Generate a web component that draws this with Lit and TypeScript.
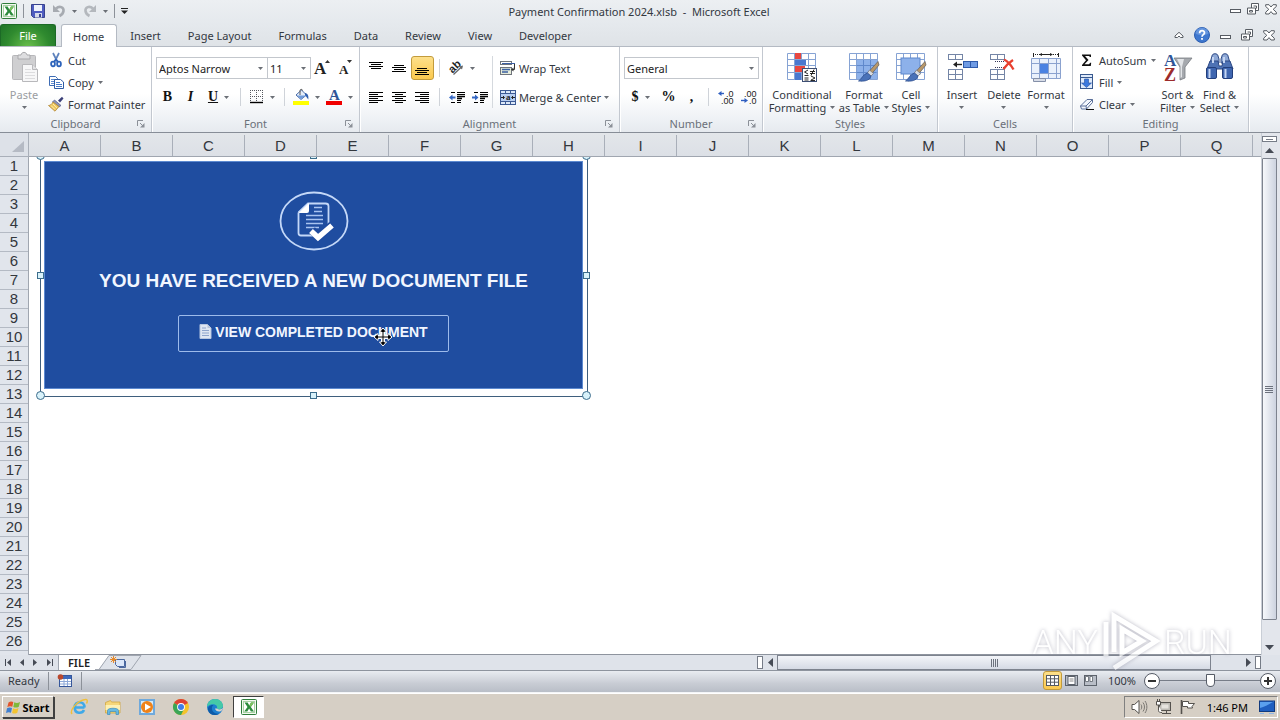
import { LitElement, html, svg, css, nothing, TemplateResult } from "lit";
import { customElement, property, state } from "lit/decorators.js";
import { classMap } from "lit/directives/class-map.js";

const icon = (w: number, h: number, body: unknown) =>
  html`<svg width=${w} height=${h} viewBox="0 0 ${w} ${h}" aria-hidden="true">${body}</svg>`;

const arrow = () => icon(5, 3, svg`<path d="M0 0h5L2.5 3z" fill="#6b6f76"/>`);

const excelMark = () => icon(16, 16, svg`
  <rect x="0.5" y="0.5" width="15" height="15" rx="1" fill="#f3f8f1" stroke="#2f7d3a"/>
  <rect x="2.5" y="2.5" width="11" height="11" fill="#fff" stroke="#a9d3a4"/>
  <path d="M3.5 3.5h3.2l1.6 2.9L10 3.5h3L9.8 8l3.2 4.6H9.9L8.1 9.6l-1.8 3H3.2L6.5 8z" fill="#2c8b3c"/>
  <path d="M10 3.5h3L9.8 8l-1.5-1.6z" fill="#7cc35f"/>`);

const saveIcon = () => icon(16, 16, svg`
  <path d="M1.500 1.500h13V14.500H3.500L1.500 12.500z" fill="#4f5cc0" stroke="#39438f"/>
  <rect x="4" y="2" width="8" height="6" fill="#eef2fc"/>
  <rect x="5" y="10" width="7" height="4.500" fill="#d6daea"/><rect x="9" y="11" width="2" height="3" fill="#39438f"/>`);
const undoIcon = () => icon(14, 14, svg`
  <path d="M4 4.500C7.500 1.500 12 3 11.500 7c-.3 2.400-2 4-4 5" fill="none" stroke="#a7abb1" stroke-width="2.600"/>
  <path d="M1 1v7h7z" fill="#a7abb1"/>`);
const redoIcon = () => icon(14, 14, svg`
  <path d="M10 4.500C6.500 1.500 2 3 2.500 7c.3 2.400 2 4 4 5" fill="none" stroke="#b4b8bd" stroke-width="2.600"/>
  <path d="M13 1v7H6z" fill="#b4b8bd"/>`);
const customizeIcon = () => icon(7, 6, svg`<path d="M0 .5h7" stroke="#222"/><path d="M0 2.500h7L3.500 6z" fill="#222"/>`);

const minIcon = () => icon(11, 11, svg`<rect x="0.5" y="5.500" width="10" height="3" fill="#fff" stroke="#575c63"/>`);
const restoreIcon = () => icon(12, 12, svg`
  <path d="M4.500.5h7v7h-3v3.500h-8v-6h4z" fill="#fff" stroke="#575c63"/>
  <path d="M4.500 5h4v3M6.500 3h3v2.500M2.500 7.500h3v1.500h-3z" fill="none" stroke="#575c63"/>`);
const closeIcon = () => icon(12, 11, svg`
  <path d="M.7.7h3.300L6 3 8 .7h3.300v1.800L8.200 5.300l3.100 2.900V10H8L6 7.600 4 10H.7V8.200l3.100-2.900L.7 2.500z" fill="#fff" stroke="#575c63"/>`);
const collapseIcon = () => icon(10, 8, svg`<path d="M1 6.500V5L5 1.300 9 5v1.500H6.500L5 5 3.500 6.500z" fill="#fff" stroke="#575c63"/>`);
const helpIcon = () => icon(16, 16, svg`
  <circle cx="8" cy="8" r="7.500" fill="#3f78cf" stroke="#2b5db0"/>
  <path d="M1.500 6.500a6.500 6 0 0 1 13 0C11 8.500 5 8.500 1.500 6.500z" fill="#7ba6e6" opacity=".6"/>
  <path d="M5.600 6.200c0-3.400 5-3.200 4.900-.3C10.400 7.800 8 7.600 8 9.800" fill="none" stroke="#fff" stroke-width="1.700"/>
  <rect x="7.100" y="11" width="1.800" height="1.800" fill="#fff"/>`);

const pasteIcon = () => icon(32, 32, svg`
  <rect x="4.500" y="3.500" width="23" height="24" rx="1" fill="#cfcfd1" stroke="#b7b7ba"/>
  <path d="M10 3h3c.5-3.500 5.500-3.500 6 0h3v4H10z" fill="#dedee0" stroke="#a9a9ac"/>
  <path d="M14.500 12.500h10l5 5V29.500h-15z" fill="#f7f7f8" stroke="#b8b8bb"/>
  <path d="M24.500 12.500v5h5" fill="#e2e2e4" stroke="#b8b8bb"/>
  <path d="M17 17.500h6M17 20.500h10M17 23.500h10M17 26.500h10" stroke="#dcdcde"/>`);
const cutIcon = () => icon(16, 16, svg`
  <path d="M5 1l4.500 9M11 1L6.500 10" stroke="#5f83bd" stroke-width="1.700" fill="none"/>
  <ellipse cx="5" cy="12" rx="1.900" ry="2.300" fill="none" stroke="#2c62ba" stroke-width="1.800"/>
  <ellipse cx="11" cy="12" rx="1.900" ry="2.300" fill="none" stroke="#2c62ba" stroke-width="1.800"/>
  <path d="M6 9.500L8 7.500l2 2" stroke="#2c62ba" stroke-width="1.500" fill="none"/>`);
const copyIcon = () => icon(16, 16, svg`
  <path d="M1.500 2.500h6l2 2v7h-8z" fill="#fff" stroke="#3e6db5"/><path d="M3 5.500h4M3 7.500h4M3 9.500h3" stroke="#5d8ad0"/>
  <path d="M6.500 5.500h6l3 2.500v6.500h-9z" fill="#fff" stroke="#2f5ca5"/><path d="M8 8.500h4M8 10.500h6M8 12.500h6" stroke="#4a7cc8"/>`);
const painterIcon = () => icon(16, 16, svg`
  <path d="M10 4.500L14 .8l1.500 1.700L12 6.500z" fill="#3a3f78"/>
  <path d="M6.500 4l6.500 5.500-2 1.500L4.500 6z" fill="#8d94b8" stroke="#555c86" stroke-width=".7"/>
  <path d="M5 6L11 10.500 7 15.200.5 9.500C2.500 9.500 4 8 5 6z" fill="#efc75c" stroke="#b3883a" stroke-width=".8"/>
  <path d="M3 9.500l4 4M5 8l4 3.800" stroke="#fff0bd" stroke-width=".9"/>`);

const growFont = () => icon(17, 16, svg`<text x="0" y="14" class="glyph" font-size="17">A</text><path d="M11 3h5L13.500 0z" fill="#333"/>`);
const shrinkFont = () => icon(15, 16, svg`<text x="1" y="14" class="glyph" font-size="13">A</text><path d="M9 0h5l-2.500 3z" fill="#333"/>`);
const borderIcon = () => icon(14, 14, svg`
  <path d="M0 .5h13M0 6.500h13M.5 0v12M6.500 0v12M12.500 0v12" stroke="#55585e" stroke-dasharray="1 1"/><path d="M0 12.500h13" stroke="#000" stroke-width="1.400"/>`);
const fillColorIcon = () => icon(16, 16, svg`
  <path d="M3 6l5.500-5 5 5L8 10.500z" fill="#e4edfa" stroke="#4b6da8"/><path d="M7 6V1.500c0-1.500 2.500-1.500 2.500 0" fill="none" stroke="#555"/>
  <path d="M12 4c3 .5 3.800 3 3.300 6.500-1.500-1.500-1.800-3.500-3.300-4z" fill="#2f5fb0"/><path d="M4 6.500h9L8 10.200z" fill="#6f9bdc"/>
  <rect x="0" y="12" width="16" height="4" fill="#ffff00"/>`);
const fontColorIcon = () => icon(16, 16, svg`<text x="3" y="11" class="glyph blue" font-size="15">A</text><rect x="0" y="12" width="16" height="4" fill="#f00000"/>`);

const lines = (ys: [number, number, number][]) => svg`${ys.map(([y, a, b]) => svg`<path d="M${a} ${y}.5H${b}" stroke="#000"/>`)}`;
const alignTop = () => icon(15, 15, lines([[1, 0, 14], [3, 2, 12], [5, 0, 14], [7, 2, 12]]));
const alignMid = () => icon(15, 15, lines([[4, 2, 12], [6, 0, 14], [8, 2, 12], [10, 0, 14]]));
const alignBot = () => icon(15, 15, lines([[7, 2, 12], [9, 0, 14], [11, 2, 12], [13, 0, 14]]));
const alignLeft = () => icon(15, 15, lines([[2, 0, 14], [4, 0, 9], [6, 0, 14], [8, 0, 9], [10, 0, 14], [12, 0, 9]]));
const alignCenter = () => icon(15, 15, lines([[2, 0, 14], [4, 3, 11], [6, 0, 14], [8, 3, 11], [10, 0, 14], [12, 3, 11]]));
const alignRight = () => icon(15, 15, lines([[2, 0, 14], [4, 5, 14], [6, 0, 14], [8, 5, 14], [10, 0, 14], [12, 5, 14]]));
const indentBody = svg`<path d="M2 2.500h4M8 2.500h8M2 12.500h4M8 12.500h4M8 4.500h8M8 10.500h4" stroke="#000"/><path d="M8 6.500h8M8 8.500h5" stroke="#000" stroke-width="1.600"/>`;
const outdent = () => icon(16, 15, svg`${indentBody}<path d="M6.500 7.500H3" stroke="#3467c4" stroke-width="2"/><path d="M0 7.500l3.500-3v6z" fill="#3467c4"/>`);
const indent = () => icon(16, 15, svg`${indentBody}<path d="M0 7.500h3" stroke="#3467c4" stroke-width="2"/><path d="M6.500 7.500l-3.500-3v6z" fill="#3467c4"/>`);
const orientIcon = () => icon(16, 16, svg`
  <text x="1" y="11" transform="rotate(-45 6 8)" font-size="11" font-weight="700" class="sans">ab</text>
  <path d="M5.500 14.500L14 6.500" stroke="#666" stroke-width="1.200"/><path d="M15 5.500l-4 1 3 3z" fill="#666"/>`);
const wrapIcon = () => icon(16, 16, svg`
  <rect x=".5" y="1.500" width="11" height="3" fill="#fff" stroke="#6f747c"/><path d="M2 3.500h13" stroke="#3b5fa3"/>
  <rect x=".5" y="7.500" width="11" height="7" fill="#e6ecda" stroke="#6f747c"/><path d="M2 9.500h8M2 12h6" stroke="#3b5fa3" stroke-width="1.300"/>
  <path d="M14.500 4v5.500h-2" fill="none" stroke="#333"/><path d="M11 9.500l2.500-2v4z" fill="#333"/>`);
const mergeIcon = () => icon(16, 15, svg`
  <rect x=".5" y=".5" width="15" height="14" fill="#dce8f8" stroke="#3c5a94"/><path d="M.5 3.500h15M.5 11.500h15M5.500.5v3M10.500.5v3M5.500 11.500v3M10.500 11.500v3" stroke="#3c5a94"/>
  <rect x="1" y="4" width="14" height="7" fill="#b7cdf0"/><text x="6" y="10" class="glyph" font-size="9">a</text>
  <path d="M1 7.500h3M12 7.500h3M3 6l1.500 1.500L3 9M13 6l-1.500 1.500L13 9" stroke="#222" fill="none"/>`);
const decInc = () => icon(16, 15, svg`<path d="M6 3.500H2" stroke="#2f5fc0" stroke-width="1.400"/><path d="M0 3.500L3.500 1v5z" fill="#2f5fc0"/>
  <text x="8" y="7" font-size="9" class="sans">.0</text><text x="3" y="14" font-size="9" class="sans">.00</text>`);
const decDec = () => icon(16, 15, svg`<path d="M0 10.500h5" stroke="#2f5fc0" stroke-width="1.400"/><path d="M7 10.500L3.500 8v5z" fill="#2f5fc0"/>
  <text x="3" y="7" font-size="9" class="sans">.00</text><text x="8" y="14" font-size="9" class="sans">.0</text>`);

const grid28 = svg`<path d="M1.500 1.500h28v26h-28z" fill="#fff" stroke="#86a3d4"/><path d="M1 7.500h28M1 13.500h28M1 20.500h28M8.500 1v26M15.500 1v26M22.500 1v26" stroke="#86a3d4"/>`;
const condIcon = () => icon(32, 32, svg`${grid28}
  <rect x="9" y="1" width="6" height="6" fill="#e8463f"/><rect x="9" y="8" width="11" height="5" fill="#4a78cf"/>
  <rect x="9" y="14" width="10" height="6" fill="#e8463f"/><rect x="9" y="21" width="6" height="7" fill="#4a78cf"/>
  <rect x="16.500" y="16.500" width="14" height="13" fill="#fff" stroke="#3d4f74"/>
  <path d="M22 18l-3.500 2 3.500 2M18.500 23.500h4M24 19.500h5M24 21.500h5M28 17.500l-3 6M18.500 26h4M18.500 28h4M25 24l4 2-4 2M24.500 28.500h4.500" stroke="#111" fill="none" stroke-width=".9"/>`);
const brush = svg`<path d="M30 9.500l-9 10 2.500 2.500 7.500-9z" fill="#b9986a" stroke="#6b665e" stroke-width=".8"/><path d="M21.500 18l4 3.500-3 3-3.500-3z" fill="#d8dbe0" stroke="#666" stroke-width=".6"/>
  <path d="M19.500 21l3.500 3c-1.500 5-7 5.500-12.500 5 3-1.500 4.500-7 9-8z" fill="#4a72b8" stroke="#2d4f8f" stroke-width=".8"/>`;
const tableIcon = () => icon(32, 32, svg`${grid28}<rect x="9" y="8" width="20" height="19" fill="#8db1ea"/><path d="M8.500 13.500h20M8.500 20.500h20M15.500 8v19M22.500 8v19" stroke="#5f88cc"/>${brush}`);
const stylesIcon = () => icon(32, 32, svg`${grid28}<rect x="6" y="6" width="19" height="16" fill="#8db1ea" stroke="#5f88cc"/>${brush}`);

const cells2 = (y: number) => svg`<rect x="2.500" y=${y + 0.5} width="14" height="5" fill="#fff" stroke="#7485a6"/><path d="M9.500 ${y}v5" stroke="#7485a6"/>`;
const insertCells = () => icon(32, 32, svg`${cells2(2)}${cells2(17)}${cells2(22)}
  <rect x="17.500" y="9.500" width="14" height="6" fill="#6f9be4" stroke="#2f5bab"/><path d="M24.500 9.500v6" stroke="#2f5bab"/>
  <path d="M10 12.500h6" stroke="#222" stroke-width="1.400"/><path d="M7 12.500l4-3v6z" fill="#222"/>`);
const deleteCells = () => icon(32, 32, svg`${cells2(2)}${cells2(17)}${cells2(22)}
  <path d="M7 9.500h10M7 15.500h10" stroke="#335" stroke-dasharray="1 1"/>
  <path d="M16 7.500c4 2 7 5.500 9.500 10M25 8c-4 2.500-7 5.500-9.500 9" stroke="#e8402f" stroke-width="2.400" fill="none"/>`);
const formatCells = () => icon(32, 32, svg`
  <path d="M3 2.500h26" stroke="#222" stroke-dasharray="1 1"/><path d="M10 2.500h12M3.500 1v4M28.500 1v4" stroke="#222"/><path d="M12 1L9 2.500 12 4zM20 1l3 1.500L20 4z" fill="#222"/>
  <path d="M1.500 6.500h29v20h-29z" fill="#eaf1fc" stroke="#8ba2cf"/><path d="M1.500 11.500h29M1.500 21.500h29M9.500 6.500v20M18.500 6.500v20M26.500 6.500v20" stroke="#8ba2cf"/>
  <rect x="10" y="12" width="8" height="9" fill="#4a82e2"/><path d="M3.500 26.500h12v3h-12z" fill="#d8dde8" stroke="#8590a8"/>`);
const sigma = () => icon(16, 16, svg`<path d="M3 2.500h9v2.500h-1L10 4H6l3.500 4L5.500 12.200H10l1.200-1.500h1L11.800 14H3v-1L7 8.300 3 3.500z" fill="#111"/>`);
const fillDown = () => icon(16, 16, svg`<rect x="1.500" y=".5" width="12" height="14" fill="#dfeafa" stroke="#39598f"/><path d="M1.500 3.500h12" stroke="#39598f"/><path d="M5.500 5h4v4h3L7.500 13.500 2.500 9h3z" fill="#3b78dd" stroke="#234f9f" stroke-width=".6"/>`);
const eraser = () => icon(16, 16, svg`<path d="M1.500 10L8 3.500h5.500v3L7.500 13h-5z" fill="#f4f7fc" stroke="#5a6f99"/><path d="M1.500 10h5.500l6.500-6.500M7 10l.5 3" fill="none" stroke="#5a6f99"/><path d="M7 13.500h8" stroke="#111"/>`);
const sortFilter = () => icon(32, 32, svg`
  <path d="M12 6h18l-7 9v11l-5 2V15z" fill="#a6a9ae" stroke="#777b82" stroke-width=".8"/><path d="M15 7h7l-2 8v10l-1.500 1V14z" fill="#e3e5e8"/>
  <text x="2" y="14" class="glyph blue" font-size="17">A</text><text x="2" y="29" class="glyph red" font-size="18">Z</text>`);
const findIcon = () => icon(32, 32, svg`
  <path d="M8 4c0-3 6-3 6 0l1 3v4H6zM18 4c0-3 6-3 6 0l2 7h-9V7z" fill="#8fa9d6" stroke="#2c4885"/>
  <path d="M6 9h8l1 5h3l1-5h7l3 8H3z" fill="#4e72b4" stroke="#2c4885"/>
  <rect x="2.500" y="15.500" width="10" height="11" rx="1.500" fill="#3f66b0" stroke="#233f7c"/><rect x="18.500" y="15.500" width="10" height="11" rx="1.500" fill="#3f66b0" stroke="#233f7c"/>
  <path d="M5.500 17v9M21.500 17v9M9 5v6M20 5v6" stroke="#c6d6f3" stroke-width="2"/>`);
const launcherIcon = () => icon(8, 8, svg`<path d="M.5 6V.5H6" fill="none" stroke="#8b9098"/><path d="M3 3l3 3" stroke="#8b9098"/><path d="M7.500 3v4.500H3z" fill="#8b9098"/>`);
const macroIcon = () => icon(16, 14, svg`
  <rect x="2.500" y="1.500" width="12" height="11" fill="#fff" stroke="#36579b"/><rect x="3" y="2" width="11" height="3" fill="#3c69bd"/>
  <path d="M3 7.500h11M3 10h11M7 5v7M10.500 5v7" stroke="#8ea9d8"/><circle cx="3.500" cy="3" r="2.800" fill="#b9482d"/>`);

const ieIcon = () => icon(18, 18, svg`
  <path d="M14.500 9.500H5.200M14.500 9.500c0-7-9.800-7-9.800 0s7.800 6 9.300 2.500" fill="none" stroke="#3fa9e8" stroke-width="2.600"/>
  <path d="M2 16C-1 12 8 2.500 15 1.500c3-.5 2.500 2.500 1.500 4" fill="none" stroke="#f0bf3a" stroke-width="1.400"/>`);
const folderIcon = () => icon(18, 18, svg`
  <path d="M1.500 4.500l5-2 1 1.500h8.500v11H1.500z" fill="#f5d67a" stroke="#d0a640" stroke-width=".8"/><path d="M1.500 7h14.500v5H1.500z" fill="#fdf0b4"/>
  <path d="M3.500 16.500v-4c0-3 11-3 11 0v4h-2.500v-3h-6v3z" fill="#67b9e2" stroke="#3c8dbb" stroke-width=".7"/>`);
const playerIcon = () => icon(18, 18, svg`<rect x="1" y="1" width="16" height="16" fill="#6fa9dc"/><rect x="3" y="3" width="12" height="12" fill="#d7ebf8"/><circle cx="9" cy="9" r="6" fill="#f08218"/><path d="M7 5.500l6 3.500-6 3.500z" fill="#fff"/>`);
const chromeIcon = () => icon(18, 18, svg`
  <circle cx="9" cy="9" r="8" fill="#f4c32b"/><path d="M2.070 5A8 8 0 0 1 15.930 5L9 9z" fill="#dd4236"/>
  <path d="M2.070 5A8 8 0 0 0 9 17L11.500 12 9 9z" fill="#3aa557"/><circle cx="9" cy="9" r="3.900" fill="#fff"/><circle cx="9" cy="9" r="3" fill="#3f7ee8"/>`);
const edgeIcon = () => icon(18, 18, svg`
  <circle cx="9" cy="9" r="8" fill="#1d7fd0"/><path d="M1 9C1 4 5 1 9 1c5 0 8 3.500 8 7 0 3-4 4-6 2.500C12 7 8 5.500 5 6.500 3 7.200 1.500 8 1 9z" fill="#45c9a8"/>
  <path d="M6 9c-1 4 3 7.500 7.500 6.500C9 18.500 3 17 2 12 1.500 9 4 6.500 7.500 7 6.800 7.500 6.200 8.200 6 9z" fill="#0e5ba8"/><path d="M11 10.500c2 1.500 4 1.200 6-.5-.3 2-1.500 3-3 3.500-2.500.5-4.500-1-5-3z" fill="#d6d3ce"/>`);
const windowsFlag = () => icon(15, 15, svg`
  <path d="M2.500 2.500C4 1.200 6 1.200 7.300 2L6.300 6.800C4.800 6 3 6 1.300 7.200z" fill="#e2552b"/><path d="M8.300 2.300c1.700.9 3.700.8 5.700-.3l-1.200 4.700c-1.700 1.100-3.700 1.200-5.500.3z" fill="#7fb93a"/>
  <path d="M1 8.300C2.700 7.200 4.500 7.200 6 8L5 12.700C3.500 12 1.800 12 0 13z" fill="#3f7fd0"/><path d="M7 8.300c1.700.9 3.700.8 5.500-.3l-1.200 4.700c-1.700 1.100-3.500 1.200-5.200.3z" fill="#f3c32f"/>`);

const speakerIcon = () => icon(18, 16, svg`<path d="M2 5.500h2.500L9 1.500v13L4.500 10.500H2z" fill="#fff" stroke="#55524e"/><path d="M11 5.500c1 1.500 1 3.500 0 5M13 3.500c2 2.500 2 6.500 0 9M15 2c2.500 3.500 2.500 8.500 0 12" fill="none" stroke="#7b7873"/>`);
const networkIcon = () => icon(17, 16, svg`<rect x="4.500" y="3.500" width="11" height="8" fill="#bdbab4" stroke="#55524e"/><rect x="6.500" y="5.500" width="7" height="4" fill="#e6e3de"/><path d="M7 14.500h9M11.500 12v2.500" stroke="#55524e"/><path d="M1.500 2.500v3.500h4V2.500zM2.500 0v3M4.500 0v3M3.500 6v5.500c0 1.500 1 2 3.500 2" stroke="#55524e" fill="#fff"/>`);
const flagIcon = () => icon(17, 16, svg`<path d="M2.500 1v14" stroke="#55524e" stroke-width="1.600"/><path d="M3.500 2.500h6v2h6l-2.500 3 .5 1.500H8.500V7.500h-5z" fill="#fff" stroke="#55524e"/>`);
const desktopIcon = () => icon(16, 14, svg`<rect x=".5" y="1" width="15" height="10.500" fill="#1f5fc0" stroke="#123b7e"/><path d="M1 8C6 7 10 4 15 1.500V2H1z" fill="#5aa0ee"/><path d="M1 13.500h4M10 13.500h5" stroke="#8fb7e6"/>`);

const viewGrid = () => icon(13, 11, svg`<rect x=".5" y=".5" width="12" height="10" fill="#fff" stroke="#555a62"/><path d="M0 3.800h13M0 7.200h13M4.500 0v11M8.500 0v11" stroke="#555a62"/>`);
const viewLayout = () => icon(13, 11, svg`<rect x=".5" y=".5" width="12" height="10" fill="#b9bec7" stroke="#5d636c"/><rect x="3" y="1.500" width="7" height="8" fill="#fff" stroke="#5d636c"/><path d="M4.500 4h4M4.500 6h4" stroke="#888"/>`);
const viewBreak = () => icon(13, 11, svg`<rect x=".5" y=".5" width="12" height="10" fill="#b9bec7" stroke="#5d636c"/><path d="M1.500 1.500h3v5h-3zM6 1.500h2.500v5H6z" fill="#fff" stroke="#5d636c" stroke-width=".8"/>`);
const tri = (d: string, w = 7, h = 7) => icon(w, h, svg`<path d=${d} fill="#464b55"/>`);

const badgeIcon = () => icon(70, 60, svg`
  <ellipse cx="35" cy="30" rx="33.500" ry="28.500" fill="none" stroke="#c4d8f8" stroke-width="1.800"/>
  <path d="M19.500 21.500L29 12.500h17.500q3 0 3 2.500v19M36 44.500H22q-2.500 0-2.500-2.500V21.500" fill="none" stroke="#c4d8f8" stroke-width="1.800"/>
  <path d="M19.500 22L30 12v8q0 2-2 2z" fill="#fff"/>
  <path d="M35 16.500h8M35 20.500h8M27 24.500h17M27 28.500h17M27 32.500h17M27 36.500h13" stroke="#a9c4f0" stroke-width="1.500"/>
  <path d="M33 39l6.500 7L53 34" fill="none" stroke="#1f4b9f" stroke-width="8"/>
  <path d="M32 40l7 6.500L53 34.500" fill="none" stroke="#fff" stroke-width="5.500"/>`);
const pageIcon = () => icon(13, 15, svg`<path d="M1 .5h7.500L12 4v10.500H1z" fill="#dfe6f2" stroke="#b7c6e0"/><path d="M8.500.5V4H12" fill="#b9c4d8"/><path d="M3 4h4M3 6.500h7M3 9h7M3 11.500h7" stroke="#8ea4cc"/>`);
const moveCursor = () => icon(18, 18, svg`
  <path d="M9 0l3.500 4H10.500v3.500H14V5.500L18 9l-4 3.500v-2h-3.500V14h2L9 18l-3.500-4h2v-3.500H4v2L0 9l4-3.500v2h3.500V4h-2z" fill="#000" stroke="#fff" stroke-width="1"/>
  <path d="M9 4v10M4 9h10" stroke="#fff" stroke-width="3"/><path d="M9 3v12M3 9h12" stroke="#000"/>`);
const newSheet = () => icon(44, 15, svg`
  <path d="M0 0h10L0 14z" fill="#fff"/><path d="M-4 14.500H0L10 .5H42L32 14.500H0" fill="none" stroke="#a0a6b0"/>
  <path d="M16.500 4.500h9v7h-7l-2-2z" fill="#dbe7fa" stroke="#4b689f"/><path d="M20 12.500h6.500V6" fill="none" stroke="#4b689f"/>
  <path d="M14.500 1v7M11 4.500h7M12 2l5 5M17 2l-5 5" stroke="#e58a2b"/>`);

const chrome = css`
  * { box-sizing: border-box; }
  button, select, input { font: inherit; color: inherit; background: none; border: 0; margin: 0; padding: 0; border-radius: 0; }
  button { display: inline-flex; align-items: center; justify-content: center; white-space: nowrap; }
  svg { display: block; flex: none; overflow: visible; }
  .glyph { font-family: "Liberation Serif", serif; font-weight: 700; fill: #222; }
  .glyph.blue { fill: #2f5597; }
  .glyph.red { fill: #9c2b2b; }
  .sans { font-family: "Liberation Sans", sans-serif; fill: #222; }
`;

@customElement("ribbon-group")
class RibbonGroup extends LitElement {
  @property() label = "";
  @property({ type: Boolean }) launcher = false;

  static styles = [chrome, css`
    :host { display: flex; flex-direction: column; flex: none; border-right: 1px solid #c3c8d0; box-shadow: 1px 0 0 #fff; }
    .body { flex: 1; display: flex; padding-top: 2px; }
    .foot { height: 17px; display: flex; align-items: center; color: #6a7079; padding: 0 6px 0 21px; }
    .name { flex: 1; text-align: center; }
    .slot { width: 15px; display: flex; justify-content: flex-end; }
  `];

  render() {
    return html`
      <div class="body"><slot></slot></div>
      <div class="foot">
        <span class="name">${this.label}</span>
        <span class="slot">${this.launcher ? html`<button aria-label="${this.label} settings">${launcherIcon()}</button>` : nothing}</span>
      </div>`;
  }
}

@customElement("app-root")
class AppRoot extends LitElement {
  @state() private tab = "Home";
  @state() private rowCount = 0;
  @state() private colCount = 0;

  private measure = () => {
    this.rowCount = Math.max(1, Math.floor((window.innerHeight - 222) / 19));
    this.colCount = Math.min(26, Math.max(1, Math.floor((window.innerWidth - 48) / 72)));
  };

  connectedCallback() {
    super.connectedCallback();
    this.measure();
    window.addEventListener("resize", this.measure);
  }
  disconnectedCallback() {
    window.removeEventListener("resize", this.measure);
    super.disconnectedCallback();
  }

  static styles = [chrome, css`
    :host { display: flex; flex-direction: column; height: 100vh; overflow: hidden; background: #fff;
      font-family: "Noto Sans", sans-serif; font-size: 11px; line-height: 13px; color: #33383f; }

    .title { display: grid; grid-template-columns: 1fr auto 1fr; align-items: center; height: 24px; flex: none;
      background: linear-gradient(#eceff2, #e5e9ed); padding: 0 3px 2px 1px; }
    .quick { display: flex; align-items: center; gap: 6px; }
    .pair { display: flex; align-items: center; gap: 6px; }
    .rule { width: 1px; height: 14px; background: #8c9199; }
    .win { display: flex; justify-content: flex-end; align-items: center; gap: 6px; padding-bottom: 4px; }

    .tabs { display: flex; height: 23px; flex: none; background: linear-gradient(#e5e9ed, #dfe3e7); border-bottom: 1px solid #b4bac3; }
    .tab { padding: 0 14px 0 13px; color: #33383f; }
    .file { width: 56px; margin: 0 5px 0 0; padding: 0; color: #fff; border-radius: 3px 3px 0 0;
      background: radial-gradient(circle at 50% 110%, #6cc04d, #2f8a2f 60%, #1f7428); border: 1px solid #1c6a26; border-bottom: 0; }
    .tab.on { background: #fff; border: 1px solid #b4bac3; border-bottom: 0; border-radius: 3px 3px 0 0; padding: 0 12px 0 11px; margin-bottom: -1px; }
    .docwin { margin-left: auto; display: flex; align-items: center; gap: 10px; padding: 0 5px 0 0; }

    .ribbon { display: flex; height: 86px; flex: none; background: linear-gradient(#fff 55%, #eef1f5 85%, #e6eaef); border-bottom: 1px solid #878d97; }
    .g-clip { width: 152px; } .g-font { width: 208px; } .g-align { width: 260px; } .g-num { width: 143px; }
    .g-styles { width: 175px; } .g-cells { width: 135px; } .g-edit { width: 176px; }
    .g-styles .large:first-child, .g-cells .large:first-child { margin-left: 3px; }
    .g-edit .small { margin: 0 1px 0 6px; }
    .large { flex-direction: column; justify-content: flex-start; width: 42px; height: 66px; gap: 4px; padding-top: 3px; }
    .large.mid { width: 48px; }
    .large.wide { width: 52px; }
    .large.widest { width: 72px; }
    .cap { display: flex; flex-direction: column; align-items: center; }
    .cap span { display: flex; align-items: center; gap: 4px; height: 13px; }
    .off { color: #9a9da2; }
    .small { display: flex; flex-direction: column; align-items: flex-start; }
    .small button { height: 22px; gap: 4px; }
    .two, .acol { display: flex; flex-direction: column; gap: 5px; padding: 7px 0 0 4px; }
    .acol { padding-left: 5px; }
    .row { display: flex; align-items: center; height: 24px; }
    .row button { height: 24px; min-width: 23px; }
    .row .drop { gap: 6px; min-width: 33px; }
    .row .text { gap: 3px; }
    .sep { width: 1px; height: 18px; background: #cfd3d9; margin: 0 5px; flex: none; }
    .letter { font: 700 14px/16px "Liberation Serif", serif; color: #111; }
    .italic { font-style: italic; }
    .under { text-decoration: underline; }
    .lit { background: linear-gradient(#fde08b, #fbc94f); border: 1px solid #c29b3c; border-radius: 3px; }
    .vsep { width: 1px; height: 52px; margin: 7px 3px 0 1px; background: #d5d9de; }

    .combo { display: flex; align-items: center; height: 22px; border: 1px solid #c3c7cd; background: #fff; color: #222; padding-right: 4px; }
    .combo + .combo { border-left: 0; }
    .combo select { appearance: none; flex: 1; min-width: 0; padding-left: 2px; outline: 0; }
    .c-face { width: 112px; } .c-size { width: 43px; } .c-num { width: 135px; }

    .work { flex: 1; min-height: 0; display: flex; background: #dfe3ea; }
    .sheet { flex: 1; min-width: 0; display: grid; grid-template-columns: 29px 1fr; grid-template-rows: 24px 1fr;
      font-family: "Liberation Sans", sans-serif; font-size: 15px; line-height: 18px; color: #33373d; }
    .corner { display: flex; align-items: flex-end; justify-content: flex-end; padding: 0 4px 4px 0; border: 1px solid #a9afb9; border-width: 0 1px 1px 0; background: #dde1e8; }
    .cols { display: flex; overflow: hidden; border-bottom: 1px solid #a0a6b0; background: linear-gradient(#e3e6ea, #dce0e6); padding-top: 2px; }
    .col { flex: 0 0 72px; border-right: 1px solid #a9afb9; text-align: center; padding-top: 2px; }
    .rows { overflow: hidden; border-right: 1px solid #a0a6b0; background: #e1e5ec; }
    .rowno { height: 19px; border-bottom: 1px solid #b4bac4; text-align: center; }
    .canvas { position: relative; overflow: hidden; background: #fff; border-bottom: 1px solid #8e949e; }

    .picture { position: absolute; left: 11px; top: -2px; width: 548px; height: 242px; border: 1px solid #3f5f7d; background: #fff; padding: 5px 4px 6px 3px; }
    .card { height: 228px; background: #1f4da0; color: #f1f6ff; display: flex; flex-direction: column; align-items: center; border: 1px solid #5d8ad0;
      font-family: "Liberation Sans", sans-serif; font-weight: 700; padding-top: 29px; }
    .head { font-size: 19px; line-height: 22px; margin: 19px 0 23px; white-space: nowrap; }
    .view { width: 271px; height: 37px; border: 1px solid #9dbbeb; border-radius: 2px; gap: 3px; font-size: 14px; padding-bottom: 4px; color: #f1f6ff; }
    .knob { position: absolute; width: 7px; height: 7px; margin: -4px; background: #d9f2fa; border: 1px solid #3c6d8c; }
    .round { width: 9px; height: 9px; margin: -5px; border-radius: 50%; }
    .t { top: 0; } .b { top: 100%; } .m { top: 50%; } .l { left: 0; } .c { left: 50%; } .r { left: 100%; }
    .cursor { position: absolute; left: 345px; top: 171px; }

    .vscroll { width: 19px; flex: none; display: flex; flex-direction: column; align-items: center; background: #e3e6ec; padding: 3px 4px 0 0; border-left: 1px solid #c9ced6; }
    .split { width: 15px; height: 6px; border: 1px solid #767c87; background: #fff; display: flex; align-items: center; justify-content: center; }
    .split i { width: 7px; height: 1px; background: #767c87; }
    .vscroll button { height: 16px; }
    .vthumb { flex: 1; width: 15px; border: 1px solid #7d838e; border-radius: 1px; background: linear-gradient(90deg, #f6f8fb, #cdd3df); display: flex; align-items: center; justify-content: center; }
    .vgap { height: 19px; }
    .grip { width: 8px; height: 7px; background: repeating-linear-gradient(#6c727d 0 1px, transparent 1px 2px); }
    .grip.h { width: 7px; height: 8px; background: repeating-linear-gradient(90deg, #6c727d 0 1px, transparent 1px 2px); }

    .sheets { display: flex; align-items: stretch; height: 15px; flex: none; background: #dfe3ea; }
    .nav { display: flex; width: 59px; justify-content: space-around; align-items: center; border-right: 1px solid #a0a6b0; padding: 0 2px; }
    .stab { background: #fff; width: 40px; font-weight: 600; color: #222; }
    .hscroll { margin-left: auto; width: 523px; display: flex; align-items: center; padding-right: 19px; }
    .hthumb { flex: 1; height: 15px; border: 1px solid #7d838e; background: linear-gradient(#f3f5f9, #d5dae4); display: flex; align-items: center; justify-content: center; }
    .nub { width: 6px; height: 13px; border: 1px solid #767c87; background: #fff; }
    .hscroll button { width: 14px; height: 15px; }
    .hgap { width: 30px; }

    .status { display: flex; align-items: center; height: 23px; flex: none; background: linear-gradient(#e9ecf1, #c8ccd4 60%, #b9bec7); border-top: 1px solid #8e949e; border-bottom: 1px solid #f4f5f7; padding: 0 4px 2px 8px; gap: 8px; }
    .status .rule { height: 18px; }
    .zoom { margin-left: auto; display: flex; align-items: center; }
    .zoom .vbtn { width: 19px; height: 19px; }
    .pct { width: 40px; text-align: center; margin: 0 2px; }
    .circ { width: 16px; height: 16px; border: 1px solid #555b66; border-radius: 50%; background: #fff; }
    .slider { appearance: none; width: 100px; height: 16px; background: linear-gradient(#777d88, #777d88) center / 100% 1px no-repeat; }
    .slider::-webkit-slider-thumb { appearance: none; width: 9px; height: 13px; background: #fff; border: 1px solid #555b66; border-radius: 1px 1px 5px 5px; }

    .task { display: flex; align-items: center; height: 27px; flex: none; background: #d6cfc5; border-top: 1px solid #fff; padding: 0 2px; color: #000; }
    .start { width: 52px; height: 22px; font-weight: 700; gap: 1px; border: 1px solid; border-color: #fff #404040 #404040 #fff; box-shadow: 1px 1px 0 #404040; }
    .apps { display: flex; margin-left: 8px; }
    .app { width: 34px; height: 22px; }
    .app.on { width: 31px; margin-left: 1px; background: #fff; border: 1px solid; border-color: #404040 #fff #fff #404040; }
    .tray { margin-left: auto; display: flex; align-items: center; gap: 7px; height: 22px; border: 1px solid; border-color: #808080 #fff #fff #808080; padding: 0 2px 0 5px; }
    .tray time { margin: 0 4px; }

    .mark { position: absolute; right: 48px; bottom: 48px; z-index: 2; filter: drop-shadow(0 0 2px #99a); opacity: .7; pointer-events: none; display: flex; align-items: center; gap: 4px;
      font: 300 34px/60px Roboto, "Liberation Sans", sans-serif; color: #fff; }
  `];

  private large(art: TemplateResult, a: string, b: string | null, size = "", off = false) {
    return html`<button class=${classMap({ large: true, mid: size === "mid", wide: size === "wide", widest: size === "widest", off })}>
      ${art}<span class="cap"><span>${a}</span><span>${b ?? nothing}${arrow()}</span></span></button>`;
  }
  private tool(label: string, art: unknown, drop = false, lit = false) {
    return html`<button aria-label=${label} class=${classMap({ drop, lit })}>${art}${drop ? arrow() : nothing}</button>`;
  }
  private combo(label: string, cls: string, value: string) {
    return html`<label class="combo ${cls}"><select aria-label=${label}><option>${value}</option></select>${arrow()}</label>`;
  }

  render() {
    const tabs = ["Home", "Insert", "Page Layout", "Formulas", "Data", "Review", "View", "Developer"];
    return html`
      <header class="title">
        <div class="quick">
          ${excelMark()}<i class="rule"></i>
          <button aria-label="Save">${saveIcon()}</button>
          <button class="pair" aria-label="Undo">${undoIcon()}${arrow()}</button>
          <button class="pair" aria-label="Redo">${redoIcon()}${arrow()}</button>
          <i class="rule"></i><button aria-label="Customize toolbar">${customizeIcon()}</button>
        </div>
        <span>Payment Confirmation 2024.xlsb&nbsp; -&nbsp; Microsoft Excel</span>
        <div class="win">
          <button aria-label="Minimize">${minIcon()}</button><button aria-label="Restore">${restoreIcon()}</button><button aria-label="Close">${closeIcon()}</button>
        </div>
      </header>

      <nav class="tabs">
        <button class="file">File</button>
        ${tabs.map((t) => html`<button class=${classMap({ tab: true, on: t === this.tab })} @click=${() => (this.tab = t)}>${t}</button>`)}
        <div class="docwin">
          <button aria-label="Collapse ribbon">${collapseIcon()}</button><button aria-label="Help">${helpIcon()}</button>
          <button aria-label="Minimize workbook">${minIcon()}</button><button aria-label="Restore workbook">${restoreIcon()}</button><button aria-label="Close workbook">${closeIcon()}</button>
        </div>
      </nav>

      <section class="ribbon">
        <ribbon-group class="g-clip" label="Clipboard" launcher>
          ${this.large(pasteIcon(), "Paste", null, "mid", true)}
          <div class="small">
            <button>${cutIcon()}Cut</button>
            <button>${copyIcon()}Copy${arrow()}</button>
            <button>${painterIcon()}Format Painter</button>
          </div>
        </ribbon-group>

        <ribbon-group class="g-font" label="Font" launcher>
          <div class="two">
            <div class="row">
              ${this.combo("Font", "c-face", "Aptos Narrow")}${this.combo("Font size", "c-size", "11")}
              ${this.tool("Grow font", growFont())}${this.tool("Shrink font", shrinkFont())}
            </div>
            <div class="row">
              ${this.tool("Bold", html`<span class="letter">B</span>`)}
              ${this.tool("Italic", html`<span class="letter italic">I</span>`)}
              ${this.tool("Underline", html`<span class="letter under">U</span>`, true)}
              <i class="sep"></i>${this.tool("Borders", borderIcon(), true)}
              <i class="sep"></i>${this.tool("Fill color", fillColorIcon(), true)}${this.tool("Font color", fontColorIcon(), true)}
            </div>
          </div>
        </ribbon-group>

        <ribbon-group class="g-align" label="Alignment" launcher>
          <div class="acol">
            <div class="row">
              ${this.tool("Top align", alignTop())}${this.tool("Middle align", alignMid())}${this.tool("Bottom align", alignBot(), false, true)}
              <i class="sep"></i>${this.tool("Orientation", orientIcon(), true)}
            </div>
            <div class="row">
              ${this.tool("Align left", alignLeft())}${this.tool("Center", alignCenter())}${this.tool("Align right", alignRight())}
              <i class="sep"></i>${this.tool("Decrease indent", outdent())}${this.tool("Increase indent", indent())}
            </div>
          </div>
          <i class="vsep"></i>
          <div class="two">
            <div class="row"><button class="text">${wrapIcon()}Wrap Text</button></div>
            <div class="row"><button class="text">${mergeIcon()}Merge &amp; Center${arrow()}</button></div>
          </div>
        </ribbon-group>

        <ribbon-group class="g-num" label="Number" launcher>
          <div class="two">
            <div class="row">${this.combo("Number format", "c-num", "General")}</div>
            <div class="row">
              ${this.tool("Currency", html`<span class="letter">$</span>`, true)}
              ${this.tool("Percent", html`<span class="letter">%</span>`)}
              ${this.tool("Comma", html`<span class="letter">,</span>`)}
              <i class="sep"></i>${this.tool("Increase decimal", decInc())}${this.tool("Decrease decimal", decDec())}
            </div>
          </div>
        </ribbon-group>

        <ribbon-group class="g-styles" label="Styles">
          ${this.large(condIcon(), "Conditional", "Formatting", "widest")}
          ${this.large(tableIcon(), "Format", "as Table", "wide")}
          ${this.large(stylesIcon(), "Cell", "Styles")}
        </ribbon-group>

        <ribbon-group class="g-cells" label="Cells">
          ${this.large(insertCells(), "Insert", null)}
          ${this.large(deleteCells(), "Delete", null)}
          ${this.large(formatCells(), "Format", null)}
        </ribbon-group>

        <ribbon-group class="g-edit" label="Editing">
          <div class="small">
            <button>${sigma()}AutoSum${arrow()}</button>
            <button>${fillDown()}Fill${arrow()}</button>
            <button>${eraser()}Clear${arrow()}</button>
          </div>
          ${this.large(sortFilter(), "Sort &", "Filter")}
          ${this.large(findIcon(), "Find &", "Select")}
        </ribbon-group>
      </section>

      <main class="work">
        <div class="sheet">
          <div class="corner">${icon(12, 11, svg`<path d="M12 0v11H0z" fill="#b5bac4"/>`)}</div>
          <div class="cols">${Array.from({ length: this.colCount }, (_, i) => html`<div class="col">${String.fromCharCode(65 + i)}</div>`)}</div>
          <div class="rows">${Array.from({ length: this.rowCount }, (_, i) => html`<div class="rowno">${i + 1}</div>`)}</div>
          <div class="canvas">
            <div class="picture">
              <div class="card">
                ${badgeIcon()}
                <div class="head">YOU HAVE RECEIVED A NEW DOCUMENT FILE</div>
                <button class="view">${pageIcon()}VIEW COMPLETED DOCUMENT</button>
              </div>
              <i class="knob t c"></i><i class="knob m l"></i><i class="knob m r"></i><i class="knob b c"></i>
              <i class="knob round t l"></i><i class="knob round t r"></i><i class="knob round b l"></i><i class="knob round b r"></i>
            </div>
            <div class="cursor">${moveCursor()}</div>
          </div>
        </div>
        <div class="vscroll">
          <div class="split"><i></i></div>
          <button aria-label="Scroll up">${tri("M0 5L4.500 0 9 5z", 9, 5)}</button>
          <div class="vthumb"><i class="grip"></i></div>
          <div class="vgap"></div>
          <button aria-label="Scroll down">${tri("M0 0h9L4.500 5z", 9, 5)}</button>
        </div>
      </main>

      <div class="sheets">
        <div class="nav">
          <button aria-label="First sheet">${tri("M0 0h1v7H0zM6 0v7L2 3.500z")}</button>
          <button aria-label="Previous sheet">${tri("M5 0v7L1 3.500z")}</button>
          <button aria-label="Next sheet">${tri("M1 0v7l4-3.500z")}</button>
          <button aria-label="Last sheet">${tri("M6 0h1v7H6zM1 0v7l4-3.500z")}</button>
        </div>
        <button class="stab">FILE</button>
        <button aria-label="New sheet">${newSheet()}</button>
        <div class="hscroll">
          <i class="nub"></i><button aria-label="Scroll left">${tri("M5 0v9L0 4.500z", 5, 9)}</button>
          <div class="hthumb"><i class="grip h"></i></div><div class="hgap"></div>
          <button aria-label="Scroll right">${tri("M0 0v9l5-4.500z", 5, 9)}</button><i class="nub"></i>
        </div>
      </div>

      <footer class="status">
        <span>Ready</span><i class="rule"></i><button aria-label="Record macro">${macroIcon()}</button><i class="rule"></i>
        <div class="zoom">
          <button class="vbtn lit" aria-label="Normal view">${viewGrid()}</button>
          <button class="vbtn" aria-label="Page layout view">${viewLayout()}</button>
          <button class="vbtn" aria-label="Page break preview">${viewBreak()}</button>
          <span class="pct">100%</span>
          <button class="circ" aria-label="Zoom out">${icon(8, 8, svg`<path d="M0 4h8" stroke="#333" stroke-width="2"/>`)}</button>
          <input class="slider" type="range" min="0" max="100" value="50" aria-label="Zoom" />
          <button class="circ" aria-label="Zoom in">${icon(8, 8, svg`<path d="M0 4h8M4 0v8" stroke="#333" stroke-width="2"/>`)}</button>
        </div>
      </footer>

      <div class="task">
        <button class="start">${windowsFlag()}Start</button>
        <div class="apps">
          <button class="app" aria-label="Internet Explorer">${ieIcon()}</button><button class="app" aria-label="Explorer">${folderIcon()}</button>
          <button class="app" aria-label="Media Player">${playerIcon()}</button><button class="app" aria-label="Chrome">${chromeIcon()}</button>
          <button class="app" aria-label="Edge">${edgeIcon()}</button><button class="app on" aria-label="Excel">${excelMark()}</button>
        </div>
        <div class="tray">${speakerIcon()}${networkIcon()}${flagIcon()}<time>1:46 PM</time>${desktopIcon()}</div>
      </div>

      <div class="mark"><span>ANY</span>
        ${icon(58, 60, svg`<path d="M4 44V10M12 40V4L54 29 12 56M20 17v24l20-12z" fill="none" stroke="#fff" stroke-width="5"/>`)}
        <span>RUN</span></div>`;
  }
}
